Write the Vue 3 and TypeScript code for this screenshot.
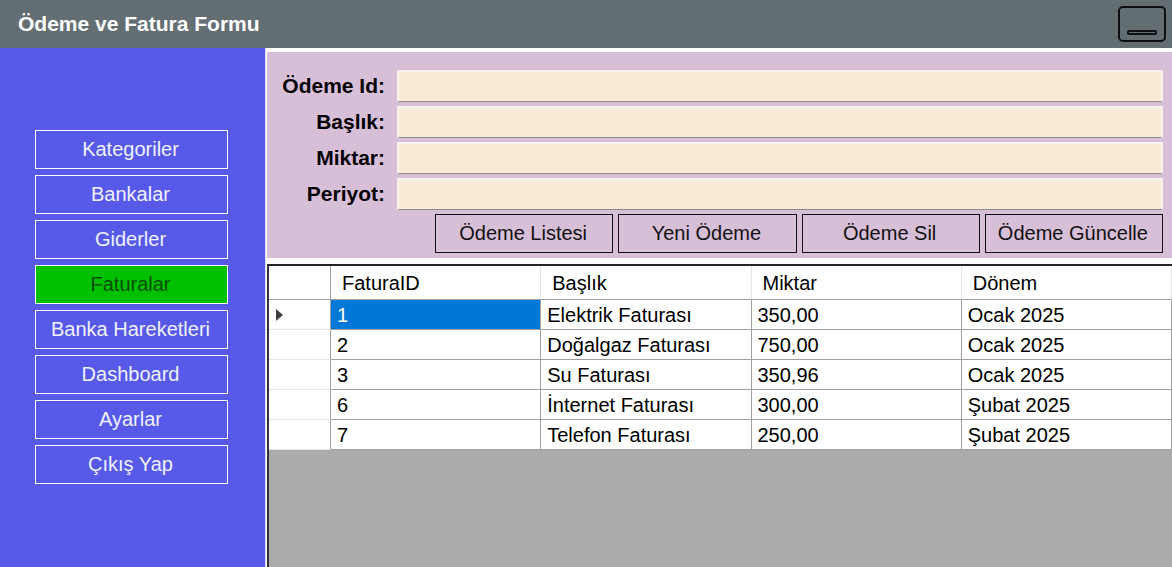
<script setup lang="ts">
import { ref } from 'vue'

interface Invoice {
  id: number
  title: string
  amount: string
  period: string
}

const menu: string[] = [
  'Kategoriler',
  'Bankalar',
  'Giderler',
  'Faturalar',
  'Banka Hareketleri',
  'Dashboard',
  'Ayarlar',
  'Çıkış Yap',
]
const activeMenu = ref('Faturalar')

const fields = ref([
  { key: 'payment-id', label: 'Ödeme Id:', value: '' },
  { key: 'title', label: 'Başlık:', value: '' },
  { key: 'amount', label: 'Miktar:', value: '' },
  { key: 'period', label: 'Periyot:', value: '' },
])

const actions: string[] = ['Ödeme Listesi', 'Yeni Ödeme', 'Ödeme Sil', 'Ödeme Güncelle']

const invoices: Invoice[] = [
  { id: 1, title: 'Elektrik Faturası', amount: '350,00', period: 'Ocak 2025' },
  { id: 2, title: 'Doğalgaz Faturası', amount: '750,00', period: 'Ocak 2025' },
  { id: 3, title: 'Su Faturası', amount: '350,96', period: 'Ocak 2025' },
  { id: 6, title: 'İnternet Faturası', amount: '300,00', period: 'Şubat 2025' },
  { id: 7, title: 'Telefon Faturası', amount: '250,00', period: 'Şubat 2025' },
]
const selectedId = ref(1)
</script>

<template>
  <div class="window">
    <header class="titlebar">
      <h1>Ödeme ve Fatura Formu</h1>
      <button class="minimize" type="button" aria-label="Simge durumuna küçült">
        <svg viewBox="0 0 50 38" width="50" height="38" fill="none" stroke="#0c1011">
          <rect x="2" y="2" width="46" height="34" rx="4" stroke-width="2" />
          <rect x="11" y="26" width="28" height="3" rx="1" stroke-width="2" />
        </svg>
      </button>
    </header>

    <div class="body">
      <nav class="sidebar">
        <button
          v-for="item in menu"
          :key="item"
          type="button"
          class="nav-button"
          :class="{ active: item === activeMenu }"
          @click="activeMenu = item"
        >
          {{ item }}
        </button>
      </nav>

      <main class="content">
        <form class="form" @submit.prevent>
          <div v-for="field in fields" :key="field.key" class="field">
            <label :for="field.key">{{ field.label }}</label>
            <input :id="field.key" v-model="field.value" type="text" />
          </div>
          <div class="actions">
            <button v-for="action in actions" :key="action" type="button">{{ action }}</button>
          </div>
        </form>

        <div class="grid">
          <table>
            <colgroup>
              <col class="marker-col" />
              <col span="4" />
            </colgroup>
            <thead>
              <tr>
                <th class="marker"></th>
                <th>FaturaID</th>
                <th>Başlık</th>
                <th>Miktar</th>
                <th>Dönem</th>
              </tr>
            </thead>
            <tbody>
              <tr v-for="row in invoices" :key="row.id" @click="selectedId = row.id">
                <td class="marker">
                  <svg v-if="row.id === selectedId" viewBox="0 0 7 12" width="7" height="12">
                    <path d="M0 0L7 6L0 12Z" fill="#404040" />
                  </svg>
                </td>
                <td :class="{ selected: row.id === selectedId }">{{ row.id }}</td>
                <td>{{ row.title }}</td>
                <td>{{ row.amount }}</td>
                <td>{{ row.period }}</td>
              </tr>
            </tbody>
          </table>
        </div>
      </main>
    </div>
  </div>
</template>

<style>
body {
  margin: 0;
}
</style>

<style scoped>
.window {
  display: flex;
  flex-direction: column;
  min-height: 100vh;
  font-family: 'Liberation Sans', Arial, sans-serif;
  font-size: 20px;
  line-height: 24px;
  color: #000;
}

.window *,
.window {
  box-sizing: border-box;
}

button,
input {
  font: inherit;
}

.titlebar {
  display: flex;
  align-items: center;
  justify-content: space-between;
  height: 48px;
  padding: 0 5px 0 18px;
  background: #636e72;
}

.titlebar h1 {
  margin: 0;
  font-size: 21px;
  line-height: 24px;
  color: #fff;
}

.minimize {
  display: flex;
  padding: 0;
  border: 0;
  background: none;
}

.body {
  display: flex;
  flex: 1;
}

.sidebar {
  display: flex;
  flex-direction: column;
  flex: 0 0 265px;
  gap: 6px;
  padding: 82px 37px 0 35px;
  background: #575ae8;
}

.nav-button {
  height: 39px;
  padding: 0 2px 1px 0;
  border: 1px solid #fff;
  background: transparent;
  color: #f0f0ff;
}

.nav-button.active {
  background: #00c000;
  color: #005000;
}

.content {
  display: flex;
  flex-direction: column;
  flex: 1;
  min-width: 0;
  gap: 6px;
  padding-top: 4px;
  border-left: 1px solid #dcdcf4;
  background: #fff;
}

.form {
  display: flex;
  flex-direction: column;
  gap: 4px;
  margin-left: 1px;
  padding: 18px 9px 5px 0;
  background: #d8bfd8;
}

.field {
  display: grid;
  grid-template-columns: 118px 1fr;
  column-gap: 12px;
}

.field label {
  font-size: 21px;
  font-weight: bold;
  line-height: 32px;
  text-align: right;
}

.field input {
  width: 100%;
  height: 32px;
  padding: 0 6px;
  border: 2px solid #f6f3f1;
  border-bottom: 1px solid #8c8c8c;
  outline: none;
  background: #faebd7;
}

.actions {
  display: grid;
  grid-template-columns: repeat(4, 1fr);
  gap: 5px;
  margin-left: 168px;
}

.actions button {
  height: 39px;
  padding: 0 2px 2px 0;
  border: 1px solid #111;
  background: transparent;
  color: #111;
  white-space: nowrap;
}

.grid {
  flex: 1;
  margin-left: 1px;
  border-top: 2px solid #222;
  border-left: 2px solid #333;
  background: #ababab;
}

table {
  width: 100%;
  table-layout: fixed;
  border-spacing: 0;
  background: #fff;
}

.marker-col {
  width: 62px;
}

th {
  height: 34px;
  padding: 0 11px;
  border-right: 1px solid #e5e5e5;
  border-bottom: 1px solid #a0a0a0;
  font-weight: normal;
  text-align: left;
}

td {
  height: 30px;
  padding: 1px 6px 0;
  border-right: 1px solid #a0a0a0;
  border-bottom: 1px solid #a0a0a0;
}

th.marker {
  border-right-color: #a0a0a0;
}

td.marker {
  padding: 1px 7px 0;
  border-bottom-color: #e5e5e5;
}

.marker svg {
  display: block;
}

td.selected {
  background: #0078d7;
  color: #fff;
}
</style>
